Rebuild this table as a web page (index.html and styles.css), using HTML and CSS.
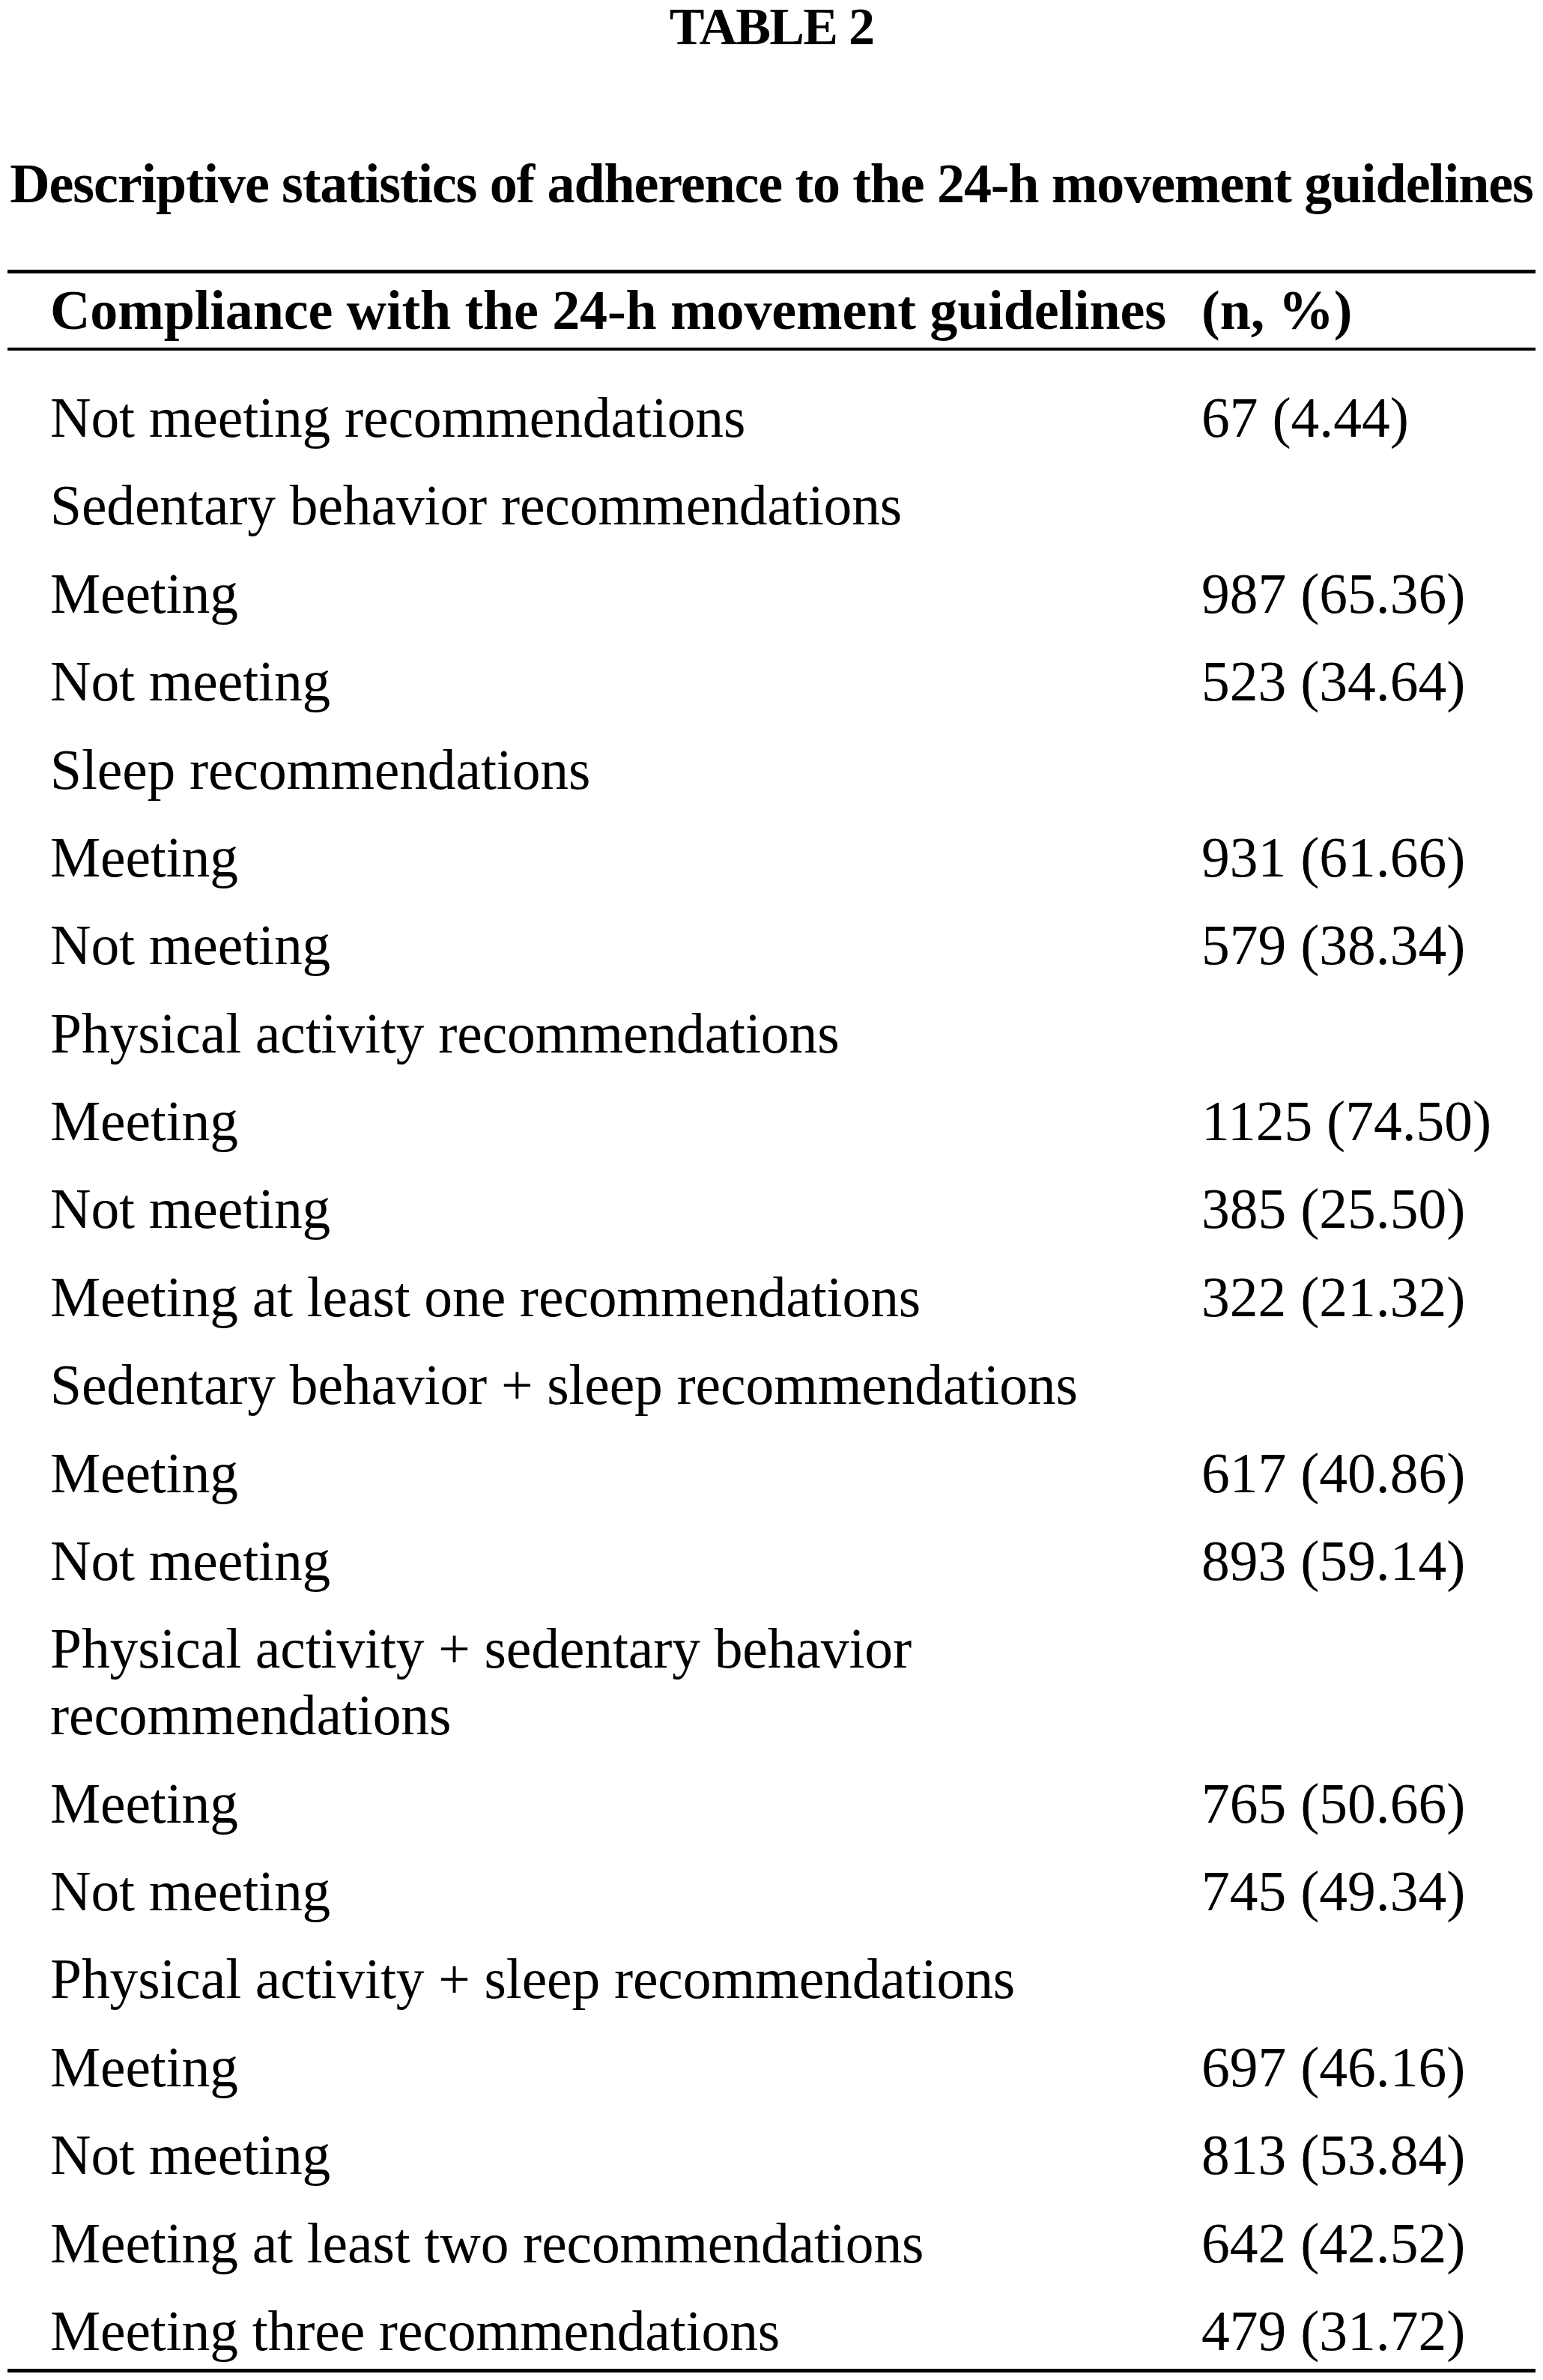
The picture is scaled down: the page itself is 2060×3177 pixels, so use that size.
FILE: index.html
```html
<!DOCTYPE html>
<html lang="en">
<head>
<meta charset="utf-8">
<title>Table 2</title>
<link rel="stylesheet" href="styles.css">
</head>
<body>
<div class="page">
  <div class="label">TABLE 2</div>
  <div class="caption">Descriptive statistics of adherence to the 24-h movement guidelines</div>
  <table class="data">
    <colgroup><col class="col1"><col class="col2"></colgroup>
    <thead>
      <tr><th class="c1">Compliance with the 24-h movement guidelines</th><th class="c2">(n, %)</th></tr>
    </thead>
    <tbody>
      <tr class="first"><td class="c1">Not meeting recommendations</td><td class="c2">67 (4.44)</td></tr>
      <tr><td class="c1">Sedentary behavior recommendations</td><td class="c2"></td></tr>
      <tr><td class="c1">Meeting</td><td class="c2">987 (65.36)</td></tr>
      <tr><td class="c1">Not meeting</td><td class="c2">523 (34.64)</td></tr>
      <tr><td class="c1">Sleep recommendations</td><td class="c2"></td></tr>
      <tr><td class="c1">Meeting</td><td class="c2">931 (61.66)</td></tr>
      <tr><td class="c1">Not meeting</td><td class="c2">579 (38.34)</td></tr>
      <tr><td class="c1">Physical activity recommendations</td><td class="c2"></td></tr>
      <tr><td class="c1">Meeting</td><td class="c2">1125 (74.50)</td></tr>
      <tr><td class="c1">Not meeting</td><td class="c2">385 (25.50)</td></tr>
      <tr><td class="c1">Meeting at least one recommendations</td><td class="c2">322 (21.32)</td></tr>
      <tr><td class="c1">Sedentary behavior + sleep recommendations</td><td class="c2"></td></tr>
      <tr><td class="c1">Meeting</td><td class="c2">617 (40.86)</td></tr>
      <tr><td class="c1">Not meeting</td><td class="c2">893 (59.14)</td></tr>
      <tr><td class="c1">Physical activity + sedentary behavior recommendations</td><td class="c2"></td></tr>
      <tr><td class="c1">Meeting</td><td class="c2">765 (50.66)</td></tr>
      <tr><td class="c1">Not meeting</td><td class="c2">745 (49.34)</td></tr>
      <tr><td class="c1">Physical activity + sleep recommendations</td><td class="c2"></td></tr>
      <tr><td class="c1">Meeting</td><td class="c2">697 (46.16)</td></tr>
      <tr><td class="c1">Not meeting</td><td class="c2">813 (53.84)</td></tr>
      <tr><td class="c1">Meeting at least two recommendations</td><td class="c2">642 (42.52)</td></tr>
      <tr class="last"><td class="c1">Meeting three recommendations</td><td class="c2">479 (31.72)</td></tr>
    </tbody>
  </table>
</div>
</body>
</html>
```

FILE: styles.css
```css
html, body {
  margin: 0;
  padding: 0;
  background: #ffffff;
}

body {
  color: #000000;
  font-family: "Liberation Serif", "Times New Roman", serif;
}

.page {
  width: 2060px;
}

.label {
  text-align: center;
  font-weight: bold;
  font-size: 70px;
  line-height: 72px;
  letter-spacing: -1.7px;
}

.caption {
  margin-top: 128px;
  text-align: center;
  font-weight: bold;
  font-size: 74px;
  line-height: 90px;
  letter-spacing: -1.1px;
  white-space: nowrap;
}

.data {
  margin: 70px 10px 0 10px;
  width: 2040px;
  table-layout: fixed;
  border-collapse: separate;
  border-spacing: 0;
}

.col1 {
  width: 1594px;
}

.col2 {
  width: 446px;
}

.data th {
  text-align: left;
  font-weight: bold;
  font-size: 74px;
  line-height: 89px;
  padding: 5px 0;
  border-top: 5px solid #000;
  border-bottom: 4px solid #000;
  white-space: nowrap;
}

.data td {
  text-align: left;
  vertical-align: top;
  font-size: 75.5px;
  line-height: 89px;
  padding: 14.2px 0;
}

.data .c1 {
  padding-left: 57px;
  letter-spacing: -0.1px;
}

.data .c2 {
  padding-left: 0;
  white-space: nowrap;
}

.data tr.first td {
  padding-top: 45px;
}

.data tr.last td {
  padding-bottom: 6px;
  border-bottom: 5px solid #000;
}
```
